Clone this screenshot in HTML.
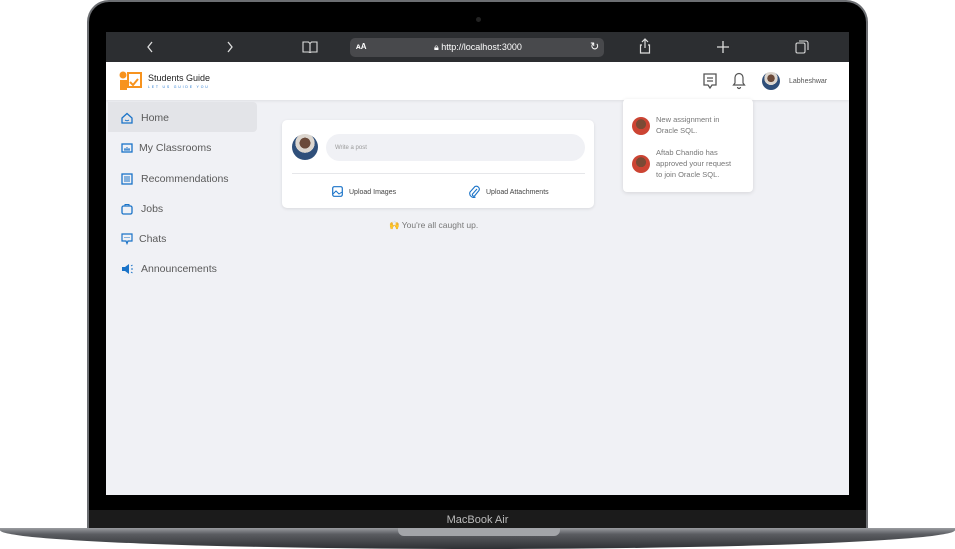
<!DOCTYPE html>
<html><head><meta charset="utf-8"><style>
*{margin:0;padding:0;box-sizing:border-box}
body{width:955px;height:549px;background:#fff;position:relative;overflow:hidden;font-family:"Liberation Sans",sans-serif}
.frame{position:absolute;left:87px;top:0;width:781px;height:530px;background:#000;border-radius:22px 22px 0 0;border:2px solid #6c6e72;border-bottom:none}
.cam{position:absolute;left:476px;top:17px;width:5px;height:5px;border-radius:50%;background:#222}
.screen{position:absolute;left:106px;top:32px;width:743px;height:463px;background:#f0f1f5;overflow:hidden}
.bar{position:absolute;left:0;top:0;width:743px;height:30px;background:#2c2e31;color:#ddd}
.url{position:absolute;left:244px;top:6px;width:254px;height:19px;background:#48494c;border-radius:5px;font-size:9px;color:#fff}
.hdr{position:absolute;left:0;top:30px;width:743px;height:38px;background:#fff;box-shadow:0 1px 3px rgba(0,0,0,.08)}
.nav{position:absolute;left:2px;font-size:10.5px;color:#5a5a5a;height:30px;width:149px;line-height:32px;padding-left:33px}
.nav svg{position:absolute;left:13px;top:10px}
.card{position:absolute;left:176px;top:88px;width:312px;height:88px;background:#fff;border-radius:5px;box-shadow:0 1px 3px rgba(0,0,0,.1)}
.av{border-radius:50%;background:radial-gradient(circle at 50% 35%,#6b4a3a 0 25%,#dcd6cf 26% 45%,#2f4f7a 46%)}
.notif{position:absolute;left:517px;top:67px;width:130px;height:93px;background:#fff;border-radius:4px;box-shadow:0 1px 4px rgba(0,0,0,.12);font-size:7.5px;color:#777;line-height:11px}
.nav2{position:absolute;font-size:7px;color:#444}
</style></head><body>
<div class="frame"></div><div class="cam"></div>
<div class="screen">
 <div class="bar">
  <svg style="position:absolute;left:40px;top:9px" width="8" height="12"><path d="M6 1L2 6l4 5" stroke="#ddd" fill="none" stroke-width="1.3"/></svg>
  <svg style="position:absolute;left:120px;top:9px" width="8" height="12"><path d="M2 1l4 5-4 5" stroke="#ddd" fill="none" stroke-width="1.3"/></svg>
  <svg style="position:absolute;left:196px;top:9px" width="16" height="12"><path d="M1 1h5.5l1.5 1.5L9.5 1H15v10H9.5L8 11.5 6.5 11H1zM8 2.5v9" stroke="#ddd" fill="none" stroke-width="1.1"/></svg>
  <div class="url"><span style="position:absolute;left:6px;top:4px;font-size:8px;font-weight:bold">ᴀA</span><span style="position:absolute;left:84px;top:3.5px">🔒︎ http://localhost:3000</span><span style="position:absolute;left:240px;top:2px;font-size:11px">↻</span></div>
  <svg style="position:absolute;left:533px;top:6px" width="12" height="16"><path d="M6 1v9M3 4l3-3 3 3M3 7H1.5v8h9V7H9" stroke="#ddd" fill="none" stroke-width="1.2"/></svg>
  <svg style="position:absolute;left:611px;top:9px" width="12" height="12"><path d="M6 0v12M0 6h12" stroke="#ddd" stroke-width="1.3"/></svg>
  <svg style="position:absolute;left:689px;top:8px" width="14" height="14"><rect x="1" y="3" width="9" height="10" rx="1.5" stroke="#ddd" fill="none" stroke-width="1.1"/><path d="M4 1h7a2 2 0 0 1 2 2v7" stroke="#ddd" fill="none" stroke-width="1.1"/></svg>
 </div>
 <div class="hdr">
  <svg style="position:absolute;left:13px;top:9px" width="24" height="20"><circle cx="4" cy="4" r="3.5" fill="#f7931e"/><rect x="1" y="9" width="7" height="10" fill="#f7931e"/><rect x="9" y="2" width="13" height="14" fill="none" stroke="#f7931e" stroke-width="2"/><path d="M11 11l3 3 5-6" stroke="#f7931e" fill="none" stroke-width="2"/></svg>
  <div style="position:absolute;left:42px;top:11px;font-size:9px;color:#222">Students Guide</div>
  <div style="position:absolute;left:42px;top:23px;font-size:3.5px;color:#2a7bd0;letter-spacing:1.8px">LET US GUIDE YOU</div>
  <svg style="position:absolute;left:597px;top:11px" width="14" height="17"><path d="M1 1h12v11H9l-2 3-2-3H1z" stroke="#555" fill="none" stroke-width="1.3"/><path d="M4 5h6M4 8h6" stroke="#555" stroke-width="1.2"/></svg>
  <svg style="position:absolute;left:626px;top:10px" width="14" height="18"><path d="M7 1.5a4 4 0 0 0-4 4V11L1.5 13h11L11 11V5.5a4 4 0 0 0-4-4zM5.5 15a1.5 1.5 0 0 0 3 0" stroke="#555" fill="none" stroke-width="1.2"/></svg>
  <div class="av" style="position:absolute;left:656px;top:10px;width:18px;height:18px"></div>
  <div style="position:absolute;left:683px;top:16px;font-size:7px;color:#555">Labheshwar</div>
 </div>
 <div style="position:absolute;left:2px;top:70px;width:149px;height:30px;background:#e3e4e8;border-radius:0 4px 4px 0"></div>
 <div class="nav" style="top:70px"><svg width="12" height="12"><path d="M1 6l5-4.5L11 6v5H1z" stroke="#1a73c8" fill="none" stroke-width="1.3"/><path d="M4 8q2 1.5 4 0" stroke="#1a73c8" fill="none"/></svg>Home</div>
 <div class="nav" style="top:100px;padding-left:31px"><svg width="12" height="12"><rect x="1" y="2" width="10" height="8" stroke="#1a73c8" fill="none" stroke-width="1.3"/><path d="M3 8h6M4 6v2M6 5v3M8 6v2" stroke="#1a73c8"/></svg>My Classrooms</div>
 <div class="nav" style="top:131px"><svg width="12" height="12"><rect x="1" y="1" width="10" height="10" stroke="#1a73c8" fill="none" stroke-width="1.3"/><path d="M3 4h6M3 6h6M3 8h6" stroke="#1a73c8"/></svg>Recommendations</div>
 <div class="nav" style="top:161px"><svg width="12" height="12"><rect x="1" y="3" width="10" height="8" rx="1.5" stroke="#1a73c8" fill="none" stroke-width="1.3"/><path d="M4 3V1.5h4V3" stroke="#1a73c8" fill="none"/></svg>Jobs</div>
 <div class="nav" style="top:191px;padding-left:31px"><svg width="12" height="12"><path d="M1 1h10v7H7l-1 2.5L5 8H1z" stroke="#1a73c8" fill="none" stroke-width="1.2"/><path d="M3.5 4.5h1M5.5 4.5h1M7.5 4.5h1" stroke="#1a73c8"/></svg>Chats</div>
 <div class="nav" style="top:221px"><svg width="12" height="12"><path d="M1 4h3l4-3v10L4 8H1z" fill="#1a73c8"/><path d="M10 3l1.5-1M10 6h2M10 9l1.5 1" stroke="#1a73c8"/></svg>Announcements</div>
 <div class="card">
  <div class="av" style="position:absolute;left:10px;top:14px;width:26px;height:26px"></div>
  <div style="position:absolute;left:44px;top:14px;width:259px;height:27px;background:#f0f1f5;border-radius:14px;font-size:6px;color:#999;padding:11px 0 0 9px">Write a post</div>
  <div style="position:absolute;left:10px;top:53px;width:293px;height:1px;background:#e6e7ea"></div>
  <svg style="position:absolute;left:50px;top:66px" width="11" height="11"><rect x=".7" y=".7" width="9.6" height="9.6" rx="1.5" stroke="#1a73c8" fill="none" stroke-width="1.2"/><path d="M1 8l3-3 3 3 3-2" stroke="#1a73c8" fill="none"/></svg>
  <div class="nav2" style="left:67px;top:69px">Upload Images</div>
  <svg style="position:absolute;left:186px;top:65px" width="12" height="13"><path d="M9 4L4.5 9a1.5 1.5 0 0 0 2 2L11 5.5a3 3 0 0 0-4-4L2 7a4 4 0 0 0 5.5 5" stroke="#1a73c8" fill="none" stroke-width="1.1"/></svg>
  <div class="nav2" style="left:204px;top:69px">Upload Attachments</div>
 </div>
 <div style="position:absolute;left:283px;top:188px;font-size:8.5px;color:#777">🙌 You're all caught up.</div>
 <div class="notif">
  <div class="av" style="position:absolute;left:9px;top:18px;width:18px;height:18px;background:radial-gradient(circle at 50% 40%,#7a4a35 0 35%,#c43 36%)"></div>
  <div style="position:absolute;left:33px;top:15px">New assignment in<br>Oracle SQL.</div>
  <div class="av" style="position:absolute;left:9px;top:56px;width:18px;height:18px;background:radial-gradient(circle at 50% 40%,#7a4a35 0 35%,#c43 36%)"></div>
  <div style="position:absolute;left:33px;top:48px">Aftab Chandio has<br>approved your request<br>to join Oracle SQL.</div>
 </div>
</div>
<div style="position:absolute;left:89px;top:510px;width:777px;height:19px;background:#1b1b1b;color:#bbb;font-size:11px;text-align:center;line-height:20px">MacBook Air</div>
<div style="position:absolute;left:0;top:528px;width:955px;height:21px;background:linear-gradient(#9a9ca0,#5a5c61 30%,#2e3034);border-radius:0 0 50% 50%/0 0 90% 90%"></div>
<div style="position:absolute;left:398px;top:528px;width:162px;height:8px;background:#a3a5a9;border-radius:0 0 6px 6px"></div>
</body></html>
